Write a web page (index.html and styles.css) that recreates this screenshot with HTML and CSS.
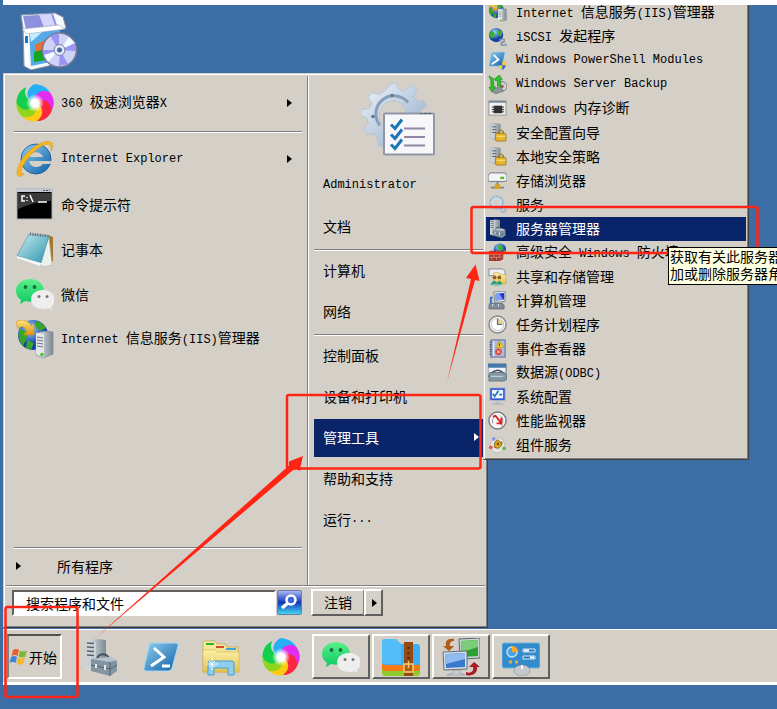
FILE: index.html
```html
<!DOCTYPE html>
<html lang="zh-CN">
<head>
    <meta charset="UTF-8">
    <meta name="viewport" content="width=device-width, initial-scale=1.0">
    <title>开始菜单 - 管理工具</title>
    <link rel="stylesheet" href="styles.css">
</head>
<body>

    <!-- shared icons -->
    <svg class="defs" width="0" height="0" aria-hidden="true">
        <defs>
            <linearGradient id="steel" x1="0" x2="1"><stop offset="0" stop-color="#e4eaee"/><stop offset="1" stop-color="#7d8a93"/></linearGradient>
            <linearGradient id="blue" x1="0" y1="0" x2="1" y2="1"><stop offset="0" stop-color="#8fd0f0"/><stop offset="1" stop-color="#0f5fa6"/></linearGradient>
            <linearGradient id="gold" x1="0" y1="0" x2="0" y2="1"><stop offset="0" stop-color="#ffe27a"/><stop offset="1" stop-color="#dc9410"/></linearGradient>
            <linearGradient id="folder" x1="0" y1="0" x2="0" y2="1"><stop offset="0" stop-color="#fbf0a8"/><stop offset="1" stop-color="#e3c250"/></linearGradient>
            <linearGradient id="gear" x1="0" y1="0" x2="1" y2="1"><stop offset="0" stop-color="#eef5fb"/><stop offset="1" stop-color="#8fa9c4"/></linearGradient>
            <linearGradient id="chat" x1="0" y1="0" x2="0" y2="1"><stop offset="0" stop-color="#5cf08a"/><stop offset="1" stop-color="#0cc862"/></linearGradient>
            <linearGradient id="pad" x1="0" y1="0" x2="1" y2="1"><stop offset="0" stop-color="#c8eef4"/><stop offset="1" stop-color="#2c92ab"/></linearGradient>
            <radialGradient id="globe" cx=".4" cy=".3"><stop offset="0" stop-color="#9fd8ff"/><stop offset="1" stop-color="#1440a8"/></radialGradient>
            <radialGradient id="core"><stop offset="0" stop-color="#fff"/><stop offset=".4" stop-color="#fff"/><stop offset="1" stop-color="#fff" stop-opacity="0"/></radialGradient>
            <path id="petal" d="M19 19C10 16 9 6 18 0.500C26 0 32 4 34 9C27 6 22 10 19 19Z"/>
        </defs>
        <symbol id="i-360" viewBox="0 0 38 38">
            <use href="#petal" fill="#27aef5"/>
            <use href="#petal" fill="#e22cf0" transform="rotate(60 19 19)"/>
            <use href="#petal" fill="#fb2740" transform="rotate(120 19 19)"/>
            <use href="#petal" fill="#ffca12" transform="rotate(180 19 19)"/>
            <use href="#petal" fill="#8ed51c" transform="rotate(225 19 19)"/>
            <use href="#petal" fill="#12cf4d" transform="rotate(275 19 19)"/>
            <path d="M19 19C10 16 9 6 18 0.500C20 0 23 1 25 2C18 6 17 12 19 19Z" fill="#27aef5"/>
            <circle cx="19" cy="19" r="9" fill="url(#core)"/>
        </symbol>
        <symbol id="i-ie" viewBox="0 0 38 38">
            <circle cx="20" cy="19" r="15" fill="url(#blue)" stroke="#0d4f94" stroke-width=".8"/>
            <path d="M27 17a7.500 7.500 0 0 0-14 0z" fill="#d4d0c8"/>
            <path d="M13 21h22c0 1-.3 2-.6 3h-7.800c-2 4-12 5-13.600-3z" fill="#d4d0c8"/>
            <path d="M8 34C1 40 -1 34 3 25C8 13 22 2 31 1.500C38 1 38 6 35 11C36 5 33 3 28 5C18 9 7 23 5 31C5 34 6 34 8 34Z" fill="#f4b71f" stroke="#c98b08" stroke-width=".4"/>
        </symbol>
        <symbol id="i-cmd" viewBox="0 0 38 38">
            <rect x="1" y="4" width="35" height="30" fill="#000" stroke="#a7abb2"/>
            <path d="M1 4h35v3H1z" fill="#c3cad3"/><path d="M27 5.500h7" stroke="#556" stroke-dasharray="2 1"/>
            <path d="M2 8h33v8C26 16 16 18 2 24z" fill="#3a3a3a"/>
            <path d="M9 11H6v5h3M11 12v1m0 2v1M14 10l3 7M22 17h9" fill="none" stroke="#fff" stroke-width="1.500"/>
        </symbol>
        <symbol id="i-note" viewBox="0 0 38 38">
            <path d="M32 5l5 2v24l-8 4z" fill="#a5772a"/>
            <path d="M33 7l3 28-9 2-4-4z" fill="#eef0ee" stroke="#9aa" stroke-width=".5"/>
            <path d="M13 4l20 2-8 27L1 26z" fill="url(#pad)" stroke="#4a8fa0" stroke-width=".6"/>
            <path d="M1 26l24 7-1 3L1 28z" fill="#f6f8f8"/>
            <path d="M14 4l18 2" stroke="#667" stroke-width="3" stroke-dasharray="1 1.500"/>
        </symbol>
        <symbol id="i-wechat" viewBox="0 0 38 38">
            <path d="M14 4C6 4 0 9 0 16c0 4 2 7 5 9l-1 4 5-3c12 3 19-3 19-10S22 4 14 4z" fill="url(#chat)"/>
            <path d="M27 15c-7 0-12 4-12 9.500S20 34 27 34c2 0 4 0 5-1l4 2-1-3c2-2 3.500-4 3.500-7.500C38.500 19 34 15 27 15z" fill="#efeeee"/>
            <g fill="#15703e"><circle cx="9.500" cy="12" r="1.900"/><circle cx="18.500" cy="12" r="1.900"/></g>
            <g fill="#777"><circle cx="23" cy="21.500" r="1.500"/><circle cx="31" cy="21.500" r="1.500"/></g>
        </symbol>
        <symbol id="i-iis" viewBox="0 0 38 38">
            <circle cx="17" cy="15" r="15" fill="url(#globe)"/>
            <path d="M4 10c5-1 8 3 7 7s-3 6-4 9c-4-5-6-10-3-16zM19 1c6 1 9 3 11 7l-6 3-4-4zM11 20l7 3-3 7-5-2z" fill="#35a52c"/>
            <path d="M0 2C6-2 14 1 15 6l3-3v12H7l4-4C9 7 5 5 2 9z" fill="url(#gold)" stroke="#c98410" stroke-width=".5"/>
            <path d="M20 13l9-2 8 1v22l-10 4-7-3z" fill="url(#steel)" stroke="#77818a" stroke-width=".6"/>
            <path d="M20 13l8 1v23l-8-3z" fill="#e3e7ea"/>
            <path d="M21 17l6 1M21 20l6 1M21 23l6 1M21 26l6 1" stroke="#68727a"/>
            <circle cx="26" cy="34.500" r="1.800" fill="#45c51b"/>
        </symbol>
        <symbol id="i-ps" viewBox="0 0 38 38">
            <path d="M9 5h25q3 0 2 3l-6 22q-1 3-4 3H4q-3 0-2-3L7 8q.5-3 2-3z" fill="url(#blue)" stroke="#a7d8f2"/>
            <path d="M12 10l10 9-13 9M20 28h8" fill="none" stroke="#fff" stroke-width="3"/>
        </symbol>
        <symbol id="i-server" viewBox="0 0 38 38">
            <path d="M4 3L15 1l9 1v27l-10 5-10-3z" fill="url(#steel)"/>
            <path d="M4 3l10 1v29L4 30z" fill="#cbd2d6"/>
            <path d="M5 5l7 .5M5 9l7 .5M5 13l7 .5M5 17l7 .5" stroke="#59646c" stroke-width="1.500"/>
            <path d="M15 20c3-5 9-5 12 0" fill="none" stroke="#42535f" stroke-width="2"/>
            <path d="M9 21l19-2 7 4v10l-7 5-19-5z" fill="#8395a2"/>
            <path d="M9 21l19 3 7-2-7-3z" fill="#b8c4cc"/>
            <path d="M9 27l19 4 7-4M28 24v14" fill="none" stroke="#526471"/>
            <path d="M14 26v4M23 27v5" stroke="#e4e8eb" stroke-width="2"/>
        </symbol>
        <symbol id="i-explorer" viewBox="0 0 38 38">
            <path d="M1 34V5q0-2 2-2h10l2 3h8l2 3h11v25z" fill="url(#folder)" stroke="#c19d3c" stroke-width=".7"/>
            <path d="M4 5h8v2H4z" fill="#2db329"/><path d="M14 8h8v2h-8z" fill="#d34830"/><path d="M24 10h10v2H24z" fill="#39a5e6"/>
            <path d="M1 12h12l2 2h22v20H1z" fill="url(#folder)" stroke="#cfae4c" stroke-width=".5"/>
            <path d="M6 37V25q0-2 2-2h22q2 0 2 2v12h-6v-7H12v7z" fill="#8ed0ec" stroke="#4b9cc8"/>
            <path d="M10 19v13M4 26h12M7 23l6 6M13 23l-6 6" stroke="#fff" stroke-width="1" opacity=".9"/>
        </symbol>
        <symbol id="i-zip" viewBox="0 0 38 38">
            <rect x="0" y="26" width="38" height="12" rx="3" fill="#8ccb2b"/>
            <rect x="0" y="22" width="38" height="11" rx="3" fill="#f77b12"/>
            <path d="M0 4q0-3 3-3h11l5 5h16q3 0 3 3v15q0 3-3 3H3q-3 0-3-3z" fill="#3caef4"/>
            <path d="M0 4q0-3 3-3h11l5 5v20H3q-3 0-3-3z" fill="#62c5fb" opacity=".6"/>
            <rect x="22" y="4" width="9" height="34" fill="#954a13"/>
            <path d="M26.500 9v15" stroke="#562605" stroke-width="2" stroke-dasharray="2 3"/>
            <path d="M22 26h9v8h-9zM26.500 23v7" fill="#b35e1a" stroke="#f6cf6d" stroke-width="1.500"/>
        </symbol>
        <symbol id="i-remote" viewBox="0 0 38 38">
            <path d="M17 1l21-1v20l-20 1z" fill="#cdd3d6" stroke="#59666d"/><path d="M19 3l17-1v16l-16 1z" fill="#2e9f30"/><path d="M19 3l17-1v7L20 14z" fill="#7ccd78"/>
            <path d="M12 1C5 0 3 4 4 8H1l6 5 5-5H8c-1-3 1-5 4-5z" fill="#b45a16"/>
            <path d="M1 14l24-1v18l-23 1z" fill="#dbe1e5" stroke="#5f6b73"/><path d="M3 16l20-1v14l-19 1z" fill="#3978cf"/><path d="M3 16l20-1v6L4 26z" fill="#8fbcf0"/>
            <path d="M11 32h7v3l5 2H5l6-2z" fill="#c6cdd2" stroke="#7f8a91" stroke-width=".5"/>
            <path d="M24 34c5 2 8-1 7-5h-4l5-5 6 5h-3c1 6-5 10-11 8z" fill="#a61e24"/>
        </symbol>
        <symbol id="i-panel" viewBox="0 0 38 38">
            <rect x="0" y="5" width="38" height="25" rx="2" fill="#338bcb" stroke="#69b7e6"/>
            <circle cx="10" cy="14" r="5" fill="#4aa5de" stroke="#bce2f8" stroke-width="1.500"/><path d="M10 14V8a6 6 0 0 1 6 6z" fill="#f9a825"/>
            <path d="M21 11h12v3H21zM21 18h12v3H21z" fill="#2a74b5" stroke="#d3ecfa"/><path d="M22 12.500h5M28 19.500h4" stroke="#fff" stroke-width="2"/>
            <path d="M7 24h3M13 24h3" stroke="#f9a825" stroke-width="3"/>
            <ellipse cx="20" cy="32.500" rx="8" ry="5.500" fill="#c3c8cb" stroke="#858b8f" stroke-width=".6"/><path d="M20 27v4" stroke="#f8f8f8" stroke-width="2"/>
        </symbol>
        <symbol id="i-setup" viewBox="0 0 58 58">
            <path d="M1 3l34-2 8 4 3 11-7 2 2 33-30 7-7-4L3 16z" fill="#f5f8fc" stroke="#8b94a2"/>
            <path d="M3 4l30-2 4 11-31 5z" fill="#8c90dd"/><path d="M19 3l12-1 4 11-11 2z" fill="#d5d6ff"/>
            <path d="M9 18l31-3v33l-29 6z" fill="#55aae8"/><path d="M9 18l18-2-16 14z" fill="#c4ecff"/>
            <path d="M15 33l10-5v9l-10 3z" fill="#ed6d2b"/><path d="M14 40l12-3v11l-12 2z" fill="#15a51d"/>
            <path d="M2 17l37-4 6 4-38 5z" fill="#fff" stroke="#9ba4b1" stroke-width=".6"/><path d="M4 21l5 1v34l-3-2z" fill="#fff"/><path d="M5 24h3v7H5z" fill="#1576cc"/>
            <circle cx="39.500" cy="38" r="17" fill="#cfd2f7" stroke="#75798f" stroke-width="1.500"/>
            <path d="M39 38L30 24l9-3zM40 38l15-8 1 9zM40 38l8 14-9 2zM39 38l-15 8-1-8z" fill="#9a95f2"/>
            <path d="M40 38l9-13 6 6zM39 38L28 50l-4-7z" fill="#f2fbff"/>
            <circle cx="39.500" cy="38" r="5.500" fill="#e6e7fa" stroke="#777b9a"/><circle cx="39.500" cy="38" r="2.500" fill="#3c6ea5"/>
        </symbol>
        <symbol id="i-tools" viewBox="0 0 76 76">
            <path d="M25 2l6-2 3 7 6 1 6-5 6 4-3 7 4 5 6-1 3 5-9 8-26 6-6 20-3 7-5-1-1-8-5-4-5 1-3-6 4-5-1-5-6-3 1-6 7-1 3-5-4-6 4-5 7 2 5-3zM29 18a15 15 0 0 0-10 26l22-15a15 15 0 0 0-12-11z" transform="translate(3 1)" fill="url(#gear)" stroke="#b5c5d6"/>
            <path d="M18 44a18 18 0 0 1 28-23" fill="none" stroke="#879eb8" stroke-width="3"/>
            <circle cx="11" cy="35" r="1.800" fill="#60768c"/><circle cx="30" cy="14" r="1.800" fill="#60768c"/>
            <rect x="22" y="32" width="50" height="41" rx="1" fill="#f7f7f9" stroke="#8f96a4" stroke-width="2"/>
            <path d="M58 32h12" stroke="#59616e" stroke-dasharray="3 1"/>
            <path d="M42 47h21M42 55.500h21M42 64h21" stroke="#9186a5" stroke-width="2"/>
            <path d="M29 43l4 4 7-9M29 53l4 4 7-9M29 63l4 4 7-9" fill="none" stroke="#1b76b8" stroke-width="3"/>
        </symbol>
        <symbol id="i-flag" viewBox="0 0 20 20">
            <path d="M4 3q3-2 6 0L8.500 9q-3-2-6 0z" fill="#e8602c"/><path d="M11 3.500q3 2 7 0L16 10q-3 1-6.500-.5z" fill="#7cb934"/>
            <path d="M2 10q3-2 6 0l-1.500 6q-3-2-6 0z" fill="#3e85d6"/><path d="M9 10.500q3 2 7 0L14 17q-3 1.500-6.500-.5z" fill="#f4b92b"/>
        </symbol>
        <symbol id="s-iscsi" viewBox="0 0 20 20">
            <circle cx="8.500" cy="8.500" r="7.500" fill="url(#globe)"/><path d="M2 5c4-1 6 1 5 4l-2 3C1 11 1 8 2 5zM10 2l5 3-1 5-3-1z" fill="#3dad35"/>
            <path d="M12 13h5v3h-3v3h6" fill="none" stroke="#82919d" stroke-width="1.500"/>
        </symbol>
        <symbol id="s-psmod" viewBox="0 0 20 20">
            <path d="M5 1h13l-3 15H1L3 3q0-2 2-2z" fill="url(#blue)" stroke="#a7d8f2" stroke-width=".6"/><path d="M6 4l5 5-7 5" fill="none" stroke="#fff" stroke-width="1.800"/>
            <path d="M11 12l4-2 4 2q0 6-4 8-4-2-4-8z" fill="#2c6fd1"/><path d="M15 10l4 2v3h-4zM11 15h4v5q-3-1-4-5z" fill="#f8ce30"/>
        </symbol>
        <symbol id="s-backup" viewBox="0 0 20 20">
            <circle cx="15" cy="12" r="5" fill="#cfd0d4" stroke="#777"/><circle cx="15" cy="12" r="1.500" fill="#a44"/>
            <path d="M6 14l8-1 2 4-8 3-4-3z" fill="#8d959b" stroke="#515961" stroke-width=".5"/>
            <path d="M1 1l5 3v9l2-1-4 6-3-5h2V6zM7 4l5-4 3 5h-2l1 8-4-2V6H8z" fill="#2fc52e" stroke="#15781a" stroke-width=".6"/>
        </symbol>
        <symbol id="s-mem" viewBox="0 0 20 20">
            <rect x="1" y="2" width="18" height="15" fill="#f3f3f3" stroke="#8d949b"/><path d="M1 3h18" stroke="#7f8c98" stroke-width="2"/>
            <path d="M6 7h9v8H6z" fill="#333"/><path d="M4 8.500h13M4 11h13M4 13.500h13" stroke="#333" stroke-width="1"/>
        </symbol>
        <symbol id="s-lock" viewBox="0 0 20 20">
            <path d="M3 1l7-.5 3 1V15l-4 3-6-2z" fill="url(#steel)" stroke="#8d979e" stroke-width=".5"/><path d="M4 4h5M4 7h5M4 10h5" stroke="#56616a"/>
            <path d="M11 12V9q2-3 5 0v3" fill="none" stroke="#a67b1f" stroke-width="1.500"/><rect x="8" y="11" width="11" height="8" rx="1" fill="#e6b52e" stroke="#9d7215" stroke-width=".8"/><path d="M9 14h9" stroke="#fae485"/>
        </symbol>
        <symbol id="s-store" viewBox="0 0 20 20">
            <path d="M2 2h16l2 3v4q0 2-2 2H2q-2 0-2-2V5z" fill="#f2f3f5" stroke="#73787f"/><rect x="13" y="6" width="4" height="2.500" fill="#4bc322"/>
            <path d="M10 11v4M3 17.500h14" stroke="#7b858d" stroke-width="2"/><rect x="7" y="14" width="6" height="5" fill="#dda51d"/>
        </symbol>
        <symbol id="s-svc" viewBox="0 0 20 20">
            <circle cx="9" cy="8" r="6" fill="none" stroke="#9dbdd8" stroke-width="3.500" stroke-dasharray="3 .8"/><circle cx="9" cy="8" r="4.500" fill="none" stroke="#cfe0ee" stroke-width="2"/>
            <circle cx="16" cy="15.500" r="2.500" fill="none" stroke="#88add0" stroke-width="2" stroke-dasharray="1.500 .7"/>
        </symbol>
        <symbol id="s-wall" viewBox="0 0 20 20">
            <circle cx="12.500" cy="7" r="6.500" fill="url(#globe)"/><path d="M9 3l5-1 2 4-4 3zM16 7l3 1-2 4z" fill="#41b137"/>
            <path d="M1 9l3-1 3 1 3-1 3 1 3-1v9l-4 2H1z" fill="#a03b2c"/><path d="M1 12h14M1 15h14M4 9v3M9 9v3M6 12v3M12 12v3M4 15v3M9 15v3" stroke="#dfa28f" stroke-width=".7"/>
        </symbol>
        <symbol id="s-share" viewBox="0 0 20 20">
            <path d="M1 2h14l3 2v5H1z" fill="#eceef0" stroke="#858a90"/><path d="M6 6h6l1 2h6v10H6z" fill="url(#folder)" stroke="#b8923a" stroke-width=".5"/>
            <circle cx="7" cy="11" r="2" fill="#9a5a2b"/><circle cx="12" cy="11" r="2" fill="#9a5a2b"/><path d="M3 18q4-7 7 0zM9 18q3-7 6 0z" fill="#2c9c80"/><path d="M2 18q6 3 13 0" fill="none" stroke="#51b7a5"/>
        </symbol>
        <symbol id="s-comp" viewBox="0 0 20 20">
            <path d="M6 1l12-1v11l-11 1z" fill="#dfe4ea" stroke="#7e8791"/><path d="M8 3l9-1v7l-9 1z" fill="#1b36cf"/><path d="M8 3h4l4 6-8 1z" fill="#819ef3"/>
            <path d="M3 6v9M2 7h3" stroke="#2f75c4" stroke-width="2"/><path d="M2 13h13l2 2v4H1v-4z" fill="#7e8d98" stroke="#4e5b66" stroke-width=".6"/><path d="M5 14v2M11 14v2" stroke="#fff"/>
        </symbol>
        <symbol id="s-task" viewBox="0 0 20 20">
            <circle cx="10" cy="10" r="9" fill="#f4f4f0" stroke="#84888b" stroke-width="1.500"/><circle cx="10" cy="10" r="6.500" fill="#fff" stroke="#c0c5ca"/><path d="M10 10V4a6 6 0 0 1 6 6z" fill="#e8cb91"/><path d="M10 4v6h5" fill="none" stroke="#527698" stroke-width="1.300"/>
        </symbol>
        <symbol id="s-event" viewBox="0 0 20 20">
            <rect x="3" y="1" width="15" height="18" fill="#aebdd7" stroke="#526998"/><path d="M6 2v16" stroke="#f6f8fb"/><path d="M3 3v15" stroke="#4b638d" stroke-width="3" stroke-dasharray="1 1.500"/>
            <path d="M12 2l5 7H8z" fill="#f4cf24" stroke="#aa8513" stroke-width=".5"/><path d="M12 4.500v3" stroke="#333"/><circle cx="11" cy="13.500" r="3.500" fill="#dd3f3a"/><path d="M9.500 12l3 3M12.500 12l-3 3" stroke="#fff"/>
        </symbol>
        <symbol id="s-odbc" viewBox="0 0 20 20">
            <path d="M0 1h19v13H0z" fill="#eef2f6" stroke="#55718d"/><path d="M0 1h19v4H0z" fill="#447baa"/><path d="M3 11q7-7 14 0" fill="none" stroke="#39444d" stroke-width="1.500"/>
            <path d="M2 10h15l3 3v4l-3 2H1v-6z" fill="#8597a3" stroke="#4d5f6b" stroke-width=".7"/><path d="M3 14h13" stroke="#d6e0e6"/>
        </symbol>
        <symbol id="s-conf" viewBox="0 0 20 20">
            <rect x="2" y="1" width="16" height="13" fill="#1f46d5" stroke="#aab8d3"/><path d="M4 3h12v9H4z" fill="#edf5ff"/><path d="M5 7l2 3 4-6M12 8h3" fill="none" stroke="#1e76bd" stroke-width="1.800"/><path d="M8 15h4v2h4v2H4v-2h4z" fill="#b7bdc3"/>
        </symbol>
        <symbol id="s-perf" viewBox="0 0 20 20">
            <circle cx="10" cy="10" r="9" fill="#f7f7f7" stroke="#777b7f" stroke-width="1.500"/><path d="M5 13a6 6 0 0 1 2-7M13 5a6 6 0 0 1 2 8" fill="none" stroke="#999"/><path d="M5 6l3-1 6 8V7M9 13h6" fill="none" stroke="#df2524" stroke-width="2"/>
        </symbol>
        <symbol id="s-com" viewBox="0 0 20 20">
            <circle cx="10" cy="11" r="8" fill="#e5e3e2" stroke="#bab9ba"/><circle cx="6" cy="4" r="2" fill="#8c93e6"/><circle cx="3" cy="13" r="2" fill="#e05b51"/><circle cx="17" cy="14" r="2" fill="#5ebd59"/>
            <path d="M10 5l2 2 3 1-1 3-3 3-4-1V8z" fill="#e7b019" stroke="#7d5a12"/><circle cx="10.500" cy="9.500" r="1.500" fill="#7a5612"/>
        </symbol>
    </svg>

    <div class="strip"></div>

    <main class="desktop">
        <a class="shortcut" href="#" aria-label="安装程序"><svg width="58" height="58"><use href="#i-setup"/></svg></a>

        <section class="start-menu">
            <div class="columns">
                <div class="programs">
                    <button class="program"><svg><use href="#i-360"/></svg><span><span class="latin">360 </span>极速浏览器<span class="latin">X</span></span><i class="arrow"></i></button>
                    <hr>
                    <button class="program"><svg><use href="#i-ie"/></svg><span class="latin">Internet Explorer</span><i class="arrow"></i></button>
                    <button class="program"><svg><use href="#i-cmd"/></svg><span>命令提示符</span></button>
                    <button class="program"><svg><use href="#i-note"/></svg><span>记事本</span></button>
                    <button class="program"><svg><use href="#i-wechat"/></svg><span>微信</span></button>
                    <button class="program"><svg><use href="#i-iis"/></svg><span><span class="latin">Internet </span>信息服务<span class="latin">(IIS)</span>管理器</span></button>
                    <hr class="bottom-rule">
                    <button class="all-programs"><i class="arrow"></i>所有程序</button>
                </div>
                <div class="places">
                    <svg class="avatar" width="76" height="77"><use href="#i-tools"/></svg>
                    <button class="place latin">Administrator</button>
                    <button class="place">文档</button>
                    <hr>
                    <button class="place">计算机</button>
                    <button class="place">网络</button>
                    <hr>
                    <button class="place">控制面板</button>
                    <button class="place">设备和打印机</button>
                    <button class="place selected">管理工具<i class="arrow"></i></button>
                    <button class="place">帮助和支持</button>
                    <button class="place">运行<span class="latin">...</span></button>
                </div>
            </div>
            <div class="menu-footer">
                <input class="search" type="text" placeholder="搜索程序和文件" aria-label="搜索程序和文件">
                <button class="search-button" aria-label="搜索">
                    <svg width="23" height="23" viewBox="0 0 23 23"><circle cx="13" cy="9" r="4.500" fill="#3b66d8" stroke="#fff" stroke-width="2.500"/><path d="M10 12l-6 5" stroke="#fff" stroke-width="3.500"/></svg>
                </button>
                <div class="logoff">
                    <button class="logoff-button">注销</button>
                    <button class="logoff-more" aria-label="更多"><i class="arrow"></i></button>
                </div>
            </div>
        </section>

        <nav class="submenu">
            <a href="#"><svg><use href="#i-iis"/></svg><span><span class="latin">Internet </span>信息服务<span class="latin">(IIS)</span>管理器</span></a>
            <a href="#"><svg><use href="#s-iscsi"/></svg><span><span class="latin">iSCSI </span>发起程序</span></a>
            <a href="#"><svg><use href="#s-psmod"/></svg><span class="latin">Windows PowerShell Modules</span></a>
            <a href="#"><svg><use href="#s-backup"/></svg><span class="latin">Windows Server Backup</span></a>
            <a href="#"><svg><use href="#s-mem"/></svg><span><span class="latin">Windows </span>内存诊断</span></a>
            <a href="#"><svg><use href="#s-lock"/></svg><span>安全配置向导</span></a>
            <a href="#"><svg><use href="#s-lock"/></svg><span>本地安全策略</span></a>
            <a href="#"><svg><use href="#s-store"/></svg><span>存储浏览器</span></a>
            <a href="#"><svg><use href="#s-svc"/></svg><span>服务</span></a>
            <a href="#" class="selected"><svg><use href="#i-server"/></svg><span>服务器管理器</span></a>
            <a href="#"><svg><use href="#s-wall"/></svg><span>高级安全<span class="latin"> Windows </span>防火墙</span></a>
            <a href="#"><svg><use href="#s-share"/></svg><span>共享和存储管理</span></a>
            <a href="#"><svg><use href="#s-comp"/></svg><span>计算机管理</span></a>
            <a href="#"><svg><use href="#s-task"/></svg><span>任务计划程序</span></a>
            <a href="#"><svg><use href="#s-event"/></svg><span>事件查看器</span></a>
            <a href="#"><svg><use href="#s-odbc"/></svg><span>数据源<span class="latin">(ODBC)</span></span></a>
            <a href="#"><svg><use href="#s-conf"/></svg><span>系统配置</span></a>
            <a href="#"><svg><use href="#s-perf"/></svg><span>性能监视器</span></a>
            <a href="#"><svg><use href="#s-com"/></svg><span>组件服务</span></a>
        </nav>
    </main>

    <footer class="taskbar">
        <button class="start"><svg width="20" height="20"><use href="#i-flag"/></svg>开始</button>
        <button class="task" aria-label="服务器管理器"><svg><use href="#i-server"/></svg></button>
        <button class="task" aria-label="PowerShell"><svg><use href="#i-ps"/></svg></button>
        <button class="task" aria-label="资源管理器"><svg><use href="#i-explorer"/></svg></button>
        <button class="task" aria-label="360 极速浏览器"><svg><use href="#i-360"/></svg></button>
        <button class="task open" aria-label="微信"><svg><use href="#i-wechat"/></svg></button>
        <button class="task open" aria-label="压缩"><svg><use href="#i-zip"/></svg></button>
        <button class="task open" aria-label="远程桌面"><svg><use href="#i-remote"/></svg></button>
        <button class="task open" aria-label="控制面板"><svg><use href="#i-panel"/></svg></button>
    </footer>

    <!-- red step marks over the desktop -->
    <svg class="marks" width="777" height="709" viewBox="0 0 777 709" aria-hidden="true">
        <g fill="none" stroke="#ff2414" stroke-width="2.500">
            <rect x="5.500" y="607" width="72" height="90" rx="2"/>
            <rect x="287" y="395" width="193.500" height="73.500" rx="2"/>
            <rect x="471.500" y="207" width="286" height="46" rx="2"/>
        </g>
        <g fill="#ff2414">
            <path d="M95 638.500L289 465.500L289 461.500L303 456L299.500 471L296 468.500L292.500 470.500Z"/>
            <path d="M447 382L471 279L466 278L475.500 264.500L479.500 281L475 280Z"/>
        </g>
    </svg>

    <div class="tooltip" role="tooltip">获取有关此服务器<br>加或删除服务器角</div>

</body>
</html>
```

FILE: styles.css
```css
* {
    box-sizing: border-box;
}
body {
    position: relative;
    margin: 0;
    padding-left: 3px;
    min-height: 100vh;
    background: #3c6ea5;
    color: #000;
    font-family: "Noto Sans CJK SC", sans-serif;
    font-size: 14px;
    line-height: 20px;
    overflow: hidden;
}
button, input {
    margin: 0;
    padding: 0;
    border: 0;
    background: none;
    color: inherit;
    font: inherit;
    text-align: left;
}
a {
    color: inherit;
    text-decoration: none;
}
svg {
    display: block;
    flex: none;
}
hr {
    width: 100%;
    height: 2px;
    margin: 0;
    border: 0;
    border-top: 1px solid #808080;
    border-bottom: 1px solid #fff;
}
.defs {
    position: absolute;
}
.latin {
    font-family: "Liberation Mono", monospace;
    font-size: 12px;
    white-space: pre;
}
.arrow {
    display: block;
    width: 0;
    height: 0;
    border: 4px solid transparent;
    border-left: 5px solid currentColor;
    border-right: 0;
}
.strip {
    height: 5px;
    background: #fff;
}

/* desktop */
.desktop {
    position: relative;
    overflow: hidden;
    padding-bottom: 1px;
}
.shortcut {
    display: block;
    width: 58px;
    margin: 7px 0 3px 17px;
}

/* start menu */
.start-menu {
    width: 100%;
    max-width: 485px;
    padding: 2px;
    background: #d4d0c8;
    border: 1px solid;
    border-color: #d4d0c8 #404040 #404040 #d4d0c8;
    box-shadow: inset 1px 1px #fff, inset -1px -1px #808080;
}
.columns {
    display: grid;
    grid-template-columns: 302px 1fr;
}
.programs {
    display: flex;
    flex-direction: column;
    padding: 5px 5px 0 8px;
    border-right: 1px solid #808080;
}
.programs hr {
    margin: 5px 0 4px;
}
.program {
    display: flex;
    align-items: center;
    gap: 7px;
    height: 45px;
    padding: 0 10px 2px 2px;
}
.program svg {
    width: 38px;
    height: 38px;
}
.program .arrow {
    margin-left: auto;
}
.programs .bottom-rule {
    margin: auto 0 0;
}
.all-programs {
    display: flex;
    align-items: center;
    gap: 36px;
    height: 36px;
    padding: 0 0 2px 2px;
}
.places {
    display: flex;
    flex-direction: column;
    padding: 5px 0 44px 5px;
    border-left: 1px solid #fff;
}
.avatar {
    align-self: center;
    margin-bottom: 8px;
}
.place {
    display: flex;
    align-items: center;
    height: 38px;
    margin: 1px 0 2px;
    padding: 0 6px 2px 9px;
}
.place .arrow {
    margin-left: auto;
}
.places hr {
    margin-top: 1px;
}
.selected {
    background: #0a246a;
    color: #fff;
}
.menu-footer {
    display: flex;
    align-items: center;
    padding: 3px 6px 9px;
    border-top: 1px solid #808080;
    box-shadow: inset 0 1px #fff;
}
.search {
    flex: 0 1 264px;
    min-width: 0;
    height: 26px;
    padding: 0 12px;
    background: #fff;
    border: 2px solid;
    border-color: #606060 #fff #fff #606060;
}
.search::placeholder {
    color: #000;
    opacity: 1;
}
.search-button {
    margin: 0 9px 0 1px;
    border: 1px solid #6c7c9c;
    border-radius: 2px;
    background: linear-gradient(#a9b7f5, #1637b8 50%, #43d8f2);
}
.logoff {
    display: flex;
}
.logoff-button, .logoff-more, .open {
    border: 2px solid;
    border-color: #fff #606060 #606060 #fff;
}
.logoff-button {
    height: 27px;
    padding: 0 11px 1px;
    border-right: 1px solid #808080;
}
.logoff-more {
    padding: 0 4px 0 6px;
}

/* administrative tools */
.submenu {
    position: absolute;
    top: -7px;
    left: 480px;
    width: 266px;
    padding: 2px;
    background: #d4d0c8;
    border: 1px solid;
    border-color: #d4d0c8 #404040 #404040 #d4d0c8;
    box-shadow: inset 1px 1px #fff, inset -1px -1px #808080;
}
.submenu a {
    display: flex;
    align-items: center;
    gap: 9px;
    height: 24px;
    padding: 0 0 2px 2px;
    white-space: nowrap;
}
.submenu svg {
    width: 19px;
    height: 19px;
}
.tooltip {
    position: absolute;
    top: 247px;
    left: 668px;
    padding: 0 1px 2px;
    background: #ffffe1;
    border: 1px solid #000;
    line-height: 17px;
    white-space: nowrap;
}

/* taskbar */
.taskbar {
    display: flex;
    gap: 2px;
    padding: 4px 4px 3px;
    background: #d4d0c8;
    border-top: 1px solid #fff;
    border-bottom: 3px solid #fff;
}
.start {
    display: flex;
    align-items: center;
    height: 45px;
    margin-right: 8px;
    padding: 0 3px 0 0;
    border: 2px solid;
    border-color: #505050 #fff #fff #808080;
}
.task {
    display: flex;
    align-items: center;
    justify-content: center;
    width: 58px;
}
.task svg {
    width: 38px;
    height: 38px;
}
.marks {
    position: absolute;
    top: 0;
    left: 0;
    pointer-events: none;
}
```
